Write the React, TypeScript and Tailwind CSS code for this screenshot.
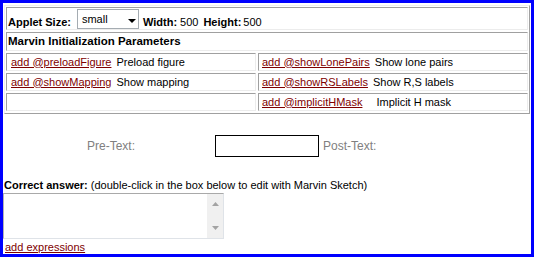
import React from "react";

const cell =
  "border border-t-[#a0a0a0] border-l-[#a0a0a0] border-b-[#ececec] border-r-[#ececec]";

function Link({ children }: { children: React.ReactNode }) {
  return <span className="text-[#800000] underline decoration-1 underline-offset-[1px]">{children}</span>;
}

export default function App() {
  return (
    <div className="w-[534px] h-[257px] border-[3px] border-[#0000ff] bg-white text-black font-['Liberation_Sans',Arial,sans-serif] text-[11px] leading-[13px] overflow-hidden">
      {/* parameters table */}
      <div className="mt-[2px] ml-[1px] w-[526px] border border-t-[#f0f0f0] border-l-[#f0f0f0] border-b-[#a0a0a0] border-r-[#a0a0a0] px-[1px] pt-[1px] pb-[2px] flex flex-col gap-[2px]">
        <div className={`${cell} h-[23px] flex items-center pl-[1px]`}>
          <span className="font-bold mt-[7px]">Applet Size:</span>
          <div className="ml-[6px] w-[62px] h-[20px] border border-[#a5acb2] bg-white flex items-start justify-between pl-[4px] pr-[1px] pt-[3px]">
            <span>small</span>
            <svg width="8" height="4" viewBox="0 0 8 4" className="mt-[6px] mr-[1px]">
              <polygon points="0,0 8,0 4,4" fill="#000" />
            </svg>
          </div>
          <span className="font-bold mt-[7px] ml-[4px]">Width:</span>
          <span className="mt-[7px] ml-[3px]">500</span>
          <span className="font-bold mt-[7px] ml-[5px]">Height:</span>
          <span className="mt-[7px] ml-[2px]">500</span>
        </div>
        <div className={`${cell} h-[19px] flex items-center pl-[1px]`}>
          <span className="font-bold text-[11.5px]">Marvin Initialization Parameters</span>
        </div>
        <div className="flex gap-[2px]">
          <div className={`${cell} w-[250px] h-[18px] flex items-center pl-[4px]`}>
            <Link>add @preloadFigure</Link>
            <span className="ml-[5px]">Preload figure</span>
          </div>
          <div className={`${cell} flex-1 h-[18px] flex items-center pl-[3px]`}>
            <Link>add @showLonePairs</Link>
            <span className="ml-[5px]">Show lone pairs</span>
          </div>
        </div>
        <div className="flex gap-[2px]">
          <div className={`${cell} w-[250px] h-[18px] flex items-center pl-[4px]`}>
            <Link>add @showMapping</Link>
            <span className="ml-[5px]">Show mapping</span>
          </div>
          <div className={`${cell} flex-1 h-[18px] flex items-center pl-[3px]`}>
            <Link>add @showRSLabels</Link>
            <span className="ml-[5px]">Show R,S labels</span>
          </div>
        </div>
        <div className="flex gap-[2px]">
          <div className={`${cell} w-[250px] h-[18px]`} />
          <div className={`${cell} flex-1 h-[18px] flex items-center pl-[3px]`}>
            <Link>add @implicitHMask</Link>
            <span className="ml-[14px]">Implicit H mask</span>
          </div>
        </div>
      </div>

      {/* pre / post text */}
      <div className="mt-[21px] h-[22px] flex items-center text-[12px] text-[#808080]">
        <span className="ml-[84px]">Pre-Text:</span>
        <div className="ml-[80px] w-[104px] h-[22px] border border-black bg-white" />
        <span className="ml-[4px]">Post-Text:</span>
      </div>

      {/* correct answer */}
      <div className="mt-[22px] ml-[1px] leading-[13px]">
        <span className="font-bold">Correct answer:</span> (double-click in the box below to edit with Marvin Sketch)
      </div>
      <div className="mt-[1px] w-[221px] h-[46px] border border-t-[#a9a9a9] border-l-[#b4b4b4] border-b-[#dfe3e8] border-r-[#dfe3e8] bg-white flex justify-end">
        <div className="w-[16px] h-full bg-[#f0f0f0] flex flex-col items-center justify-between py-[8px]">
          <svg width="7" height="4" viewBox="0 0 7 4">
            <polygon points="0,4 7,4 3.5,0" fill="#a3a3a3" />
          </svg>
          <svg width="7" height="4" viewBox="0 0 7 4">
            <polygon points="0,0 7,0 3.5,4" fill="#a3a3a3" />
          </svg>
        </div>
      </div>
      <div className="mt-[2px] ml-[2px] leading-[13px]">
        <Link>add expressions</Link>
      </div>
    </div>
  );
}
